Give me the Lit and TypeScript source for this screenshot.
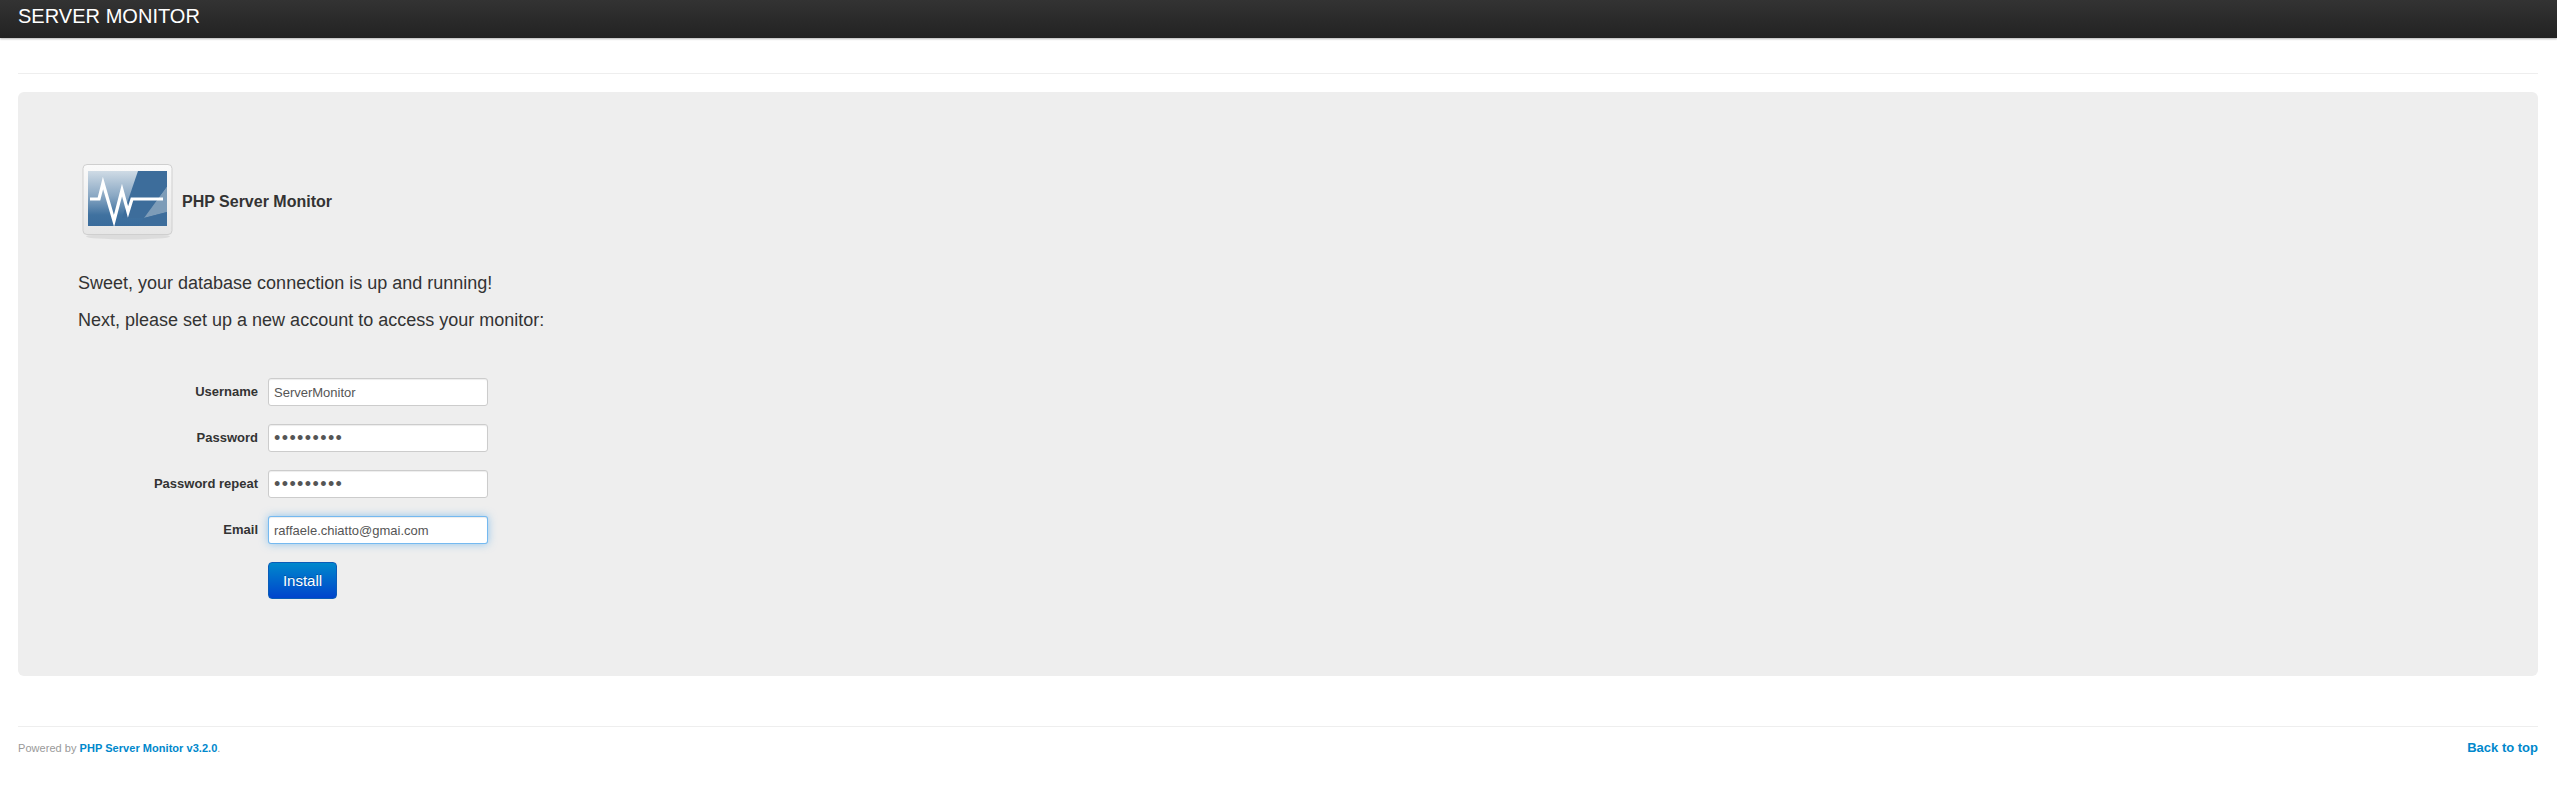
import { LitElement, html, css } from "lit";
import { customElement } from "lit/decorators.js";

@customElement("app-root")
export class AppRoot extends LitElement {
  static styles = css`
    :host { display: block; font-family: "Liberation Sans", Arial, sans-serif; font-size: 13px; line-height: 20px; color: #333; background: #fff; height: 798px; overflow: hidden; }
    * { box-sizing: border-box; }
    .navbar { height: 38px; background: linear-gradient(to bottom, #333, #222); box-shadow: 0 1px 2px rgba(0,0,0,.3); padding: 0 18px; color: #fff; font-size: 20px; line-height: 32px; letter-spacing: .03px; }
    .container { padding: 0 19px 0 18px; }
    .rule { height: 2px; background: #eee; border-bottom: 1px solid #fff; }
    .top { margin-top: 35px; }
    .hero { margin-top: 17px; height: 584px; background: #eee; border-radius: 6px; padding: 72px 60px 0; }
    .brand { display: flex; align-items: center; gap: 8px; height: 76px; padding-left: 4px; font-size: 16px; font-weight: bold; color: #333; }
    .lead { margin: 0; font-size: 18px; line-height: 27px; color: #333; }
    .lead.first { margin-top: 30px; }
    .lead.second { margin-top: 10px; }
    form { margin-top: 44px; display: grid; grid-template-columns: 180px 220px; column-gap: 10px; row-gap: 18px; align-items: center; }
    label { text-align: right; font-weight: bold; font-size: 13px; color: #333; }
    input { display: block; width: 220px; height: 28px; margin: 0; background: #fff; border: 1px solid #ccc; border-radius: 3px; box-shadow: inset 0 1px 1px rgba(0,0,0,.075); padding: 0 5px; font: 13px "Liberation Sans", Arial, sans-serif; color: #555; outline: none; }
    input.secret { font-size: 18px; letter-spacing: 1.4px; }
    input.focus { border-color: rgba(82,168,236,.8); box-shadow: inset 0 1px 1px rgba(0,0,0,.075), 0 0 8px rgba(82,168,236,.6); }
    .btn { grid-column: 2; justify-self: start; width: 69px; height: 37px; color: #fff; font-size: 15px; line-height: 35px; text-align: center; border: 1px solid #0a5cb8; border-radius: 4px; background: linear-gradient(to bottom, #0088cc, #0044cc); text-shadow: 0 -1px 0 rgba(0,0,0,.25); }
    .footer-rule { margin-top: 50px; }
    footer { display: flex; justify-content: space-between; margin-top: 10px; }
    .powered { font-size: 11px; line-height: 20px; color: #999; letter-spacing: .04px; }
    a { color: #0088cc; text-decoration: none; font-weight: bold; }
    .back { font-size: 13px; line-height: 20px; }
  `;

  private logo() {
    return html`<svg width="92" height="76" viewBox="0 0 92 76" aria-hidden="true">
      <defs>
        <linearGradient id="frame" x1="0" y1="0" x2="0" y2="1"><stop offset="0" stop-color="#fafafa"/><stop offset="1" stop-color="#e6e6e6"/></linearGradient>
        <linearGradient id="screen" x1="0" y1="0" x2="0" y2="1"><stop offset="0" stop-color="#cfdbe5"/><stop offset=".45" stop-color="#8aa8c4"/><stop offset=".8" stop-color="#3f719f"/><stop offset="1" stop-color="#3a6c9c"/></linearGradient>
      </defs>
      <ellipse cx="46" cy="72.5" rx="42" ry="3" fill="#dcdcdc"/>
      <rect x="1" y="0.5" width="89" height="70" rx="4" fill="url(#frame)" stroke="#cfcfcf"/>
      <rect x="6" y="7" width="79" height="55" fill="url(#screen)"/>
      <polygon points="56,7 85,7 85,23 62,54 40,54" fill="#3d6d9b"/>
      <polygon points="85,23 85,48 62,54" fill="#7d9cb8"/>
      <polygon points="62,54 85,48 85,62 56,62" fill="#3d6d9b"/>
      <polyline points="8,35 17,35 21,19 32,57 40,26 46,48 50,35 81,35" fill="none" stroke="#fff" stroke-width="3.2"/>
    </svg>`;
  }

  render() {
    return html`
      <div class="navbar">SERVER MONITOR</div>
      <div class="container">
        <div class="rule top"></div>
        <div class="hero">
          <div class="brand">${this.logo()}<span>PHP Server Monitor</span></div>
          <p class="lead first">Sweet, your database connection is up and running!</p>
          <p class="lead second">Next, please set up a new account to access your monitor:</p>
          <form>
            <label>Username</label><input type="text" value="ServerMonitor" />
            <label>Password</label><input class="secret" type="password" value="ServerMon" />
            <label>Password repeat</label><input class="secret" type="password" value="ServerMon" />
            <label>Email</label><input class="focus" type="text" value="raffaele.chiatto@gmai.com" />
            <div class="btn">Install</div>
          </form>
        </div>
        <div class="rule footer-rule"></div>
        <footer>
          <span class="powered">Powered by <a href="#">PHP Server Monitor v3.2.0</a>.</span>
          <a class="back" href="#">Back to top</a>
        </footer>
      </div>
    `;
  }
}
